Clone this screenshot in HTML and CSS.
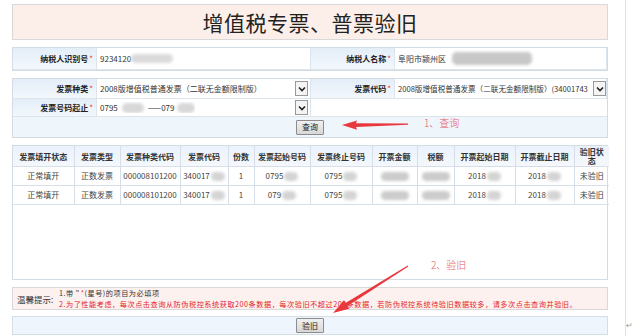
FILE: index.html
```html
<!DOCTYPE html>
<html lang="zh-CN">
<head>
    <meta charset="utf-8">
    <title>增值税专票、普票验旧</title>
    <link rel="stylesheet" href="styles.css">
</head>
<body>
<div class="page">
    <div class="main">

        <!-- Title -->
        <div class="title">增值税专票、普票验旧</div>

        <!-- Taxpayer -->
        <div class="form-box form-one">
            <div class="label">纳税人识别号<span class="req">*</span></div>
            <div class="value">9234120 <span class="blur blur-a"></span></div>
            <div class="label">纳税人名称<span class="req">*</span></div>
            <div class="value">阜阳市颍州区 <span class="blur blur-b"></span></div>
        </div>

        <!-- Query -->
        <div class="form-box form-two">
            <div class="label">发票种类<span class="req">*</span></div>
            <div class="value">
                <div class="select">
                    <span class="select-text">2008版增值税普通发票（二联无金额限制版）</span>
                    <span class="arrow"><svg width="8" height="6" viewBox="0 0 8 6"><path d="M1 1.5 L4 4.5 L7 1.5" fill="none" stroke="#222" stroke-width="1.6"/></svg></span>
                </div>
            </div>
            <div class="label">发票代码<span class="req">*</span></div>
            <div class="value">
                <div class="select">
                    <span class="select-text tight">2008版增值税普通发票（二联无金额限制版）(34001743</span>
                    <span class="arrow"><svg width="8" height="6" viewBox="0 0 8 6"><path d="M1 1.5 L4 4.5 L7 1.5" fill="none" stroke="#222" stroke-width="1.6"/></svg></span>
                </div>
            </div>

            <div class="label">发票号码起止<span class="req">*</span></div>
            <div class="value">
                <div class="select">
                    <span class="select-text">0795<span class="blur blur-c"></span>——079<span class="blur blur-d"></span></span>
                    <span class="arrow"><svg width="8" height="6" viewBox="0 0 8 6"><path d="M1 1.5 L4 4.5 L7 1.5" fill="none" stroke="#222" stroke-width="1.6"/></svg></span>
                </div>
            </div>
            <div class="blank"></div>
            <div class="blank"></div>

            <div class="btn-row"><button class="btn">查询</button></div>
        </div>

        <!-- Results -->
        <div class="table-box">
            <table class="grid">
                <colgroup>
                    <col style="width:61px"><col style="width:46px"><col style="width:60px"><col style="width:48px">
                    <col style="width:26px"><col style="width:56px"><col style="width:62px"><col style="width:45px">
                    <col style="width:37px"><col style="width:61px"><col style="width:59px"><col style="width:35px">
                </colgroup>
                <tr>
                    <th>发票填开状态</th><th>发票类型</th><th>发票种类代码</th><th>发票代码</th>
                    <th>份数</th><th>发票起始号码</th><th>发票终止号码</th><th>开票金额</th>
                    <th>税额</th><th>开票起始日期</th><th>开票截止日期</th><th>验旧状态</th>
                </tr>
                <tr>
                    <td>正常填开</td><td>正数发票</td><td>000008101200</td><td>340017<span class="blur blur-s"></span></td>
                    <td>1</td><td>0795<span class="blur blur-s"></span></td><td>0795<span class="blur blur-s"></span></td>
                    <td><span class="blur blur-m"></span></td><td><span class="blur blur-m"></span></td>
                    <td>2018<span class="blur blur-s"></span></td><td>2018<span class="blur blur-s"></span></td><td>未验旧</td>
                </tr>
                <tr>
                    <td>正常填开</td><td>正数发票</td><td>000008101200</td><td>340017<span class="blur blur-s"></span></td>
                    <td>1</td><td>079<span class="blur blur-s"></span></td><td>0795<span class="blur blur-s"></span></td>
                    <td><span class="blur blur-m"></span></td><td><span class="blur blur-m"></span></td>
                    <td>2018<span class="blur blur-s"></span></td><td>2018<span class="blur blur-s"></span></td><td>未验旧</td>
                </tr>
            </table>
        </div>

        <!-- Tips -->
        <div class="tips">
            <div class="tips-title">温馨提示:</div>
            <div class="tips-body">
                <div>1.带 "<span class="req">*</span>(星号)的项目为必填项</div>
                <div class="warn">2.为了性能考虑，每次点击查询从防伪税控系统获取200条数据，每次验旧不超过200条数据，若防伪税控系统待验旧数据较多，请多次点击查询并验旧。</div>
            </div>
        </div>

        <!-- Submit -->
        <div class="submit-row"><button class="btn">验旧</button></div>
    </div>

    <!-- Annotations -->
    <svg class="marks" width="636" height="336" viewBox="0 0 636 336">
        <polygon points="408,123.5 356,123.3 357,120.4 342,125.1 357,129.8 356,126.9 408,124.7" fill="#e8383d"/>
        <polygon points="407.7,265.6 345.6,303.0 344.0,300.3 333,313 349.2,308.7 347.6,306.0 408.3,266.4" fill="#e8383d"/>
    </svg>
    <div class="note note-one">1、查询</div>
    <div class="note note-two">2、验旧</div>
</div>
<div class="para">↵</div>
</body>
</html>
```

FILE: styles.css
```css
/* General */
body {
    position: relative;
    margin: 0;
    font-family: "Noto Sans CJK SC", "Liberation Sans", sans-serif;
    font-size: 8px;
    color: #333;
    background: #fff;
}

.page {
    position: relative;
    width: 625px;
    height: 336px;
    border-right: 1px solid #e2e2e2;
    overflow: hidden;
}

.main {
    width: 596px;
    margin-left: 12px;
    padding-top: 4px;
    display: flex;
    flex-direction: column;
    gap: 7px;
}

/* Title */
.title {
    height: 36px;
    line-height: 35px;
    text-align: center;
    font-size: 21px;
    color: #222;
    background: #fcefe9;
    border: 1px solid #d9d9d9;
    box-sizing: border-box;
    letter-spacing: 0.5px;
}

/* Forms */
.form-box {
    display: grid;
    grid-template-columns: 83px 215px 83px 1fr;
    border: 1px solid #d3dce5;
    box-sizing: border-box;
}

.form-one {
    grid-auto-rows: 22px;
}

.form-two {
    grid-auto-rows: 20px 18px 20px;
}

.label {
    background: linear-gradient(#e4eef8, #f2f7fc);
    font-weight: bold;
    text-align: right;
    padding-right: 3px;
    display: flex;
    align-items: center;
    justify-content: flex-end;
    border-bottom: 1px solid #dde5ec;
    color: #222;
}

.req {
    color: #e33;
    font-weight: normal;
    margin-left: 1px;
}

.value {
    background: #fff;
    display: flex;
    align-items: center;
    padding-left: 3px;
    border-left: 1px solid #dde5ec;
    border-right: 1px solid #dde5ec;
    border-bottom: 1px solid #dde5ec;
    white-space: nowrap;
    overflow: hidden;
}

.blank {
    background: #fff;
    border-bottom: 1px solid #dde5ec;
}

.select {
    width: 208px;
    display: flex;
    align-items: center;
    justify-content: space-between;
}

.select-text {
    display: flex;
    align-items: center;
    overflow: hidden;
}

.select-text.tight {
    font-size: 7.6px;
}

.arrow {
    width: 11px;
    height: 13px;
    border: 1px solid #999;
    background: #f4f4f4;
    display: flex;
    align-items: center;
    justify-content: center;
    flex-shrink: 0;
}

.btn-row {
    grid-column: 1 / -1;
    background: #eef5fb;
    display: flex;
    align-items: center;
    justify-content: center;
}

/* Buttons */
.btn {
    font-family: "Noto Sans CJK SC", sans-serif;
    font-size: 8px;
    line-height: 10px;
    height: 15px;
    padding: 0 5px;
    color: #222;
    background: linear-gradient(#f0f0f0, #d8d8d8);
    border: 1px solid #8c8c8c;
    border-radius: 1px;
}

/* Blurred numbers */
.blur {
    display: inline-block;
    background: #cfcfcf;
    border-radius: 5px;
    filter: blur(1.6px);
    vertical-align: middle;
}

.blur-a { width: 42px; height: 9px; background: #dadada; }
.blur-b { width: 80px; height: 13px; margin-left: 6px; background: #c8c8c8; }
.blur-c { width: 22px; height: 10px; margin: 0 4px; background: #d8d8d8; }
.blur-d { width: 18px; height: 10px; margin-left: 2px; background: #d8d8d8; }
.blur-s { width: 14px; height: 9px; margin-left: 1px; background: #d4d4d4; }
.blur-m { width: 28px; height: 9px; background: #cccccc; }

/* Results table */
.table-box {
    height: 135px;
    border: 1px solid #d3dce5;
    box-sizing: border-box;
}

.grid {
    width: 100%;
    table-layout: fixed;
    border-collapse: collapse;
}

.grid th,
.grid td {
    border: 1px solid #d6dfe8;
    text-align: center;
    padding: 0 2px;
    white-space: normal;
    overflow: hidden;
}

.grid tr:first-child th { border-top: none; }
.grid th:first-child, .grid td:first-child { border-left: none; }
.grid th:last-child, .grid td:last-child { border-right: none; }

.grid th {
    background: linear-gradient(#eaf2fa, #f4f8fc);
    font-weight: bold;
    color: #333;
    height: 20px;
    line-height: 9px;
}

.grid td {
    height: 18px;
    line-height: 10px;
    color: #444;
    white-space: nowrap;
}

/* Tips */
.tips {
    height: 23px;
    background: #fcf1ee;
    border: 1px solid #d9d9d9;
    box-sizing: border-box;
    display: flex;
    align-items: center;
    padding-left: 4px;
}

.tips-title {
    width: 42px;
    font-size: 8.5px;
    color: #333;
}

.tips-body {
    font-size: 7.2px;
    letter-spacing: 0.5px;
    line-height: 10.5px;
    white-space: nowrap;
}

.warn {
    color: #e3262c;
}

.submit-row {
    margin-top: -1px;
    height: 19px;
    background: #eef5fc;
    border: 1px solid #d5dde5;
    box-sizing: border-box;
    display: flex;
    align-items: center;
    justify-content: center;
}

/* Annotations */
.marks {
    position: absolute;
    left: 0;
    top: 0;
    pointer-events: none;
}

.note {
    position: absolute;
    color: #e35a5e;
    font-size: 10px;
    line-height: 12px;
    font-weight: 300;
}

.note-one { left: 424px; top: 117px; }
.note-two { left: 431px; top: 259px; }

.para {
    position: absolute;
    left: 626px;
    top: 320px;
    color: #999;
    font-size: 8px;
    line-height: 10px;
}
```
